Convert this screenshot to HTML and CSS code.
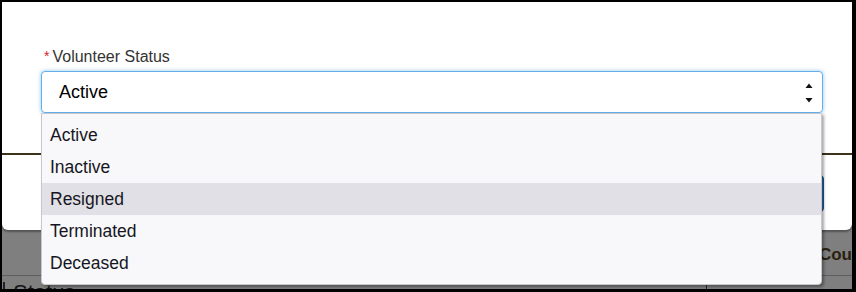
FILE: index.html
```html
<!DOCTYPE html>
<html>
<head>
<meta charset="utf-8">
<link rel="stylesheet" href="styles.css">
</head>
<body>
<div class="frame">
  <div class="page">
    <div class="thead">
      <div class="th-spacer"></div>
      <div class="th">Cou</div>
    </div>
    <div class="trow">
      <div class="td-first"><span class="bar"></span><span class="status">Status</span></div>
      <div class="td"></div>
    </div>
  </div>

  <div class="modal">
    <div class="modal-body">
      <label class="field-label"><span class="req">*</span>Volunteer Status</label>
      <div class="select">
        <span class="select-value">Active</span>
        <svg class="arrows" width="8" height="20" viewBox="0 0 8 20">
          <polygon points="0.5,5 4,0.5 7.5,5" fill="#111"/>
          <polygon points="0.5,15 7.5,15 4,19.5" fill="#111"/>
        </svg>
      </div>
    </div>
    <div class="modal-footer">
      <button class="btn">Save</button>
    </div>
  </div>

  <ul class="dropdown">
    <li class="opt">Active</li>
    <li class="opt">Inactive</li>
    <li class="opt hl">Resigned</li>
    <li class="opt">Terminated</li>
    <li class="opt">Deceased</li>
  </ul>
</div>
</body>
</html>
```

FILE: styles.css
```css
* { box-sizing: border-box; }
html, body { margin: 0; padding: 0; background: #000; }
body { font-family: "Liberation Sans", Arial, sans-serif; }

.frame {
  position: relative;
  width: 850px;
  height: 287px;
  margin: 2px 0 0 2px;
  overflow: hidden;
  background: #7f7f7f;
}

/* page behind the backdrop */
.page { padding-top: 230px; }
.thead {
  display: flex;
  height: 44px;
  border-bottom: 1px solid #5e5e5e;
}
.th-spacer { width: 819px; }
.th {
  font-weight: bold;
  font-size: 17px;
  color: #2b2110;
  padding-top: 13px;
  padding-left: 2px;
}
.trow {
  display: grid;
  grid-template-columns: 705px 1fr;
  height: 40px;
}
.td-first {
  border-right: 1px solid #2a2a2a;
  display: flex;
  align-items: flex-start;
  padding-top: 4px;
}
.bar {
  display: inline-block;
  width: 2px;
  height: 12px;
  margin-left: 1px;
  margin-top: 2px;
  background: #222;
}
.status {
  margin-left: 8px;
  font-size: 22px;
  color: #161616;
}

/* modal */
.modal {
  position: absolute;
  top: 0;
  left: 0;
  width: 850px;
  height: 228px;
  background: #fff;
  border-radius: 0 0 6px 6px;
  box-shadow: 0 2px 2px rgba(0,0,0,0.35);
}
.modal-body {
  padding: 44px 29px 40px 39px;
  border-bottom: 2px solid #3d3118;
}
.field-label {
  display: block;
  height: 20px;
  line-height: 20px;
  font-size: 16px;
  color: #333;
  padding-left: 3px;
  margin-bottom: 5px;
}
.req {
  color: #d9212c;
  font-size: 14px;
  margin-right: 3px;
  vertical-align: 1px;
}
.select {
  display: flex;
  align-items: center;
  justify-content: space-between;
  height: 42px;
  border: 1px solid #66afe9;
  border-radius: 4px;
  box-shadow: 0 0 4px rgba(102,175,233,0.7);
  padding: 0 9px 0 17px;
  background: #fff;
}
.select-value {
  font-size: 18px;
  color: #000;
}
.arrows { display: block; margin-top: 1px; }

.modal-footer {
  display: flex;
  justify-content: flex-end;
  padding: 20px 28px 0 0;
}
.btn {
  height: 37px;
  width: 90px;
  border: 1px solid #1d5a92;
  border-radius: 4px;
  background: #2a6fb0;
  color: #fff;
  font-family: inherit;
  font-size: 16px;
}

/* dropdown menu */
.dropdown {
  position: absolute;
  left: 39px;
  top: 111px;
  width: 781px;
  height: 172px;
  margin: 0;
  padding: 5px 0;
  list-style: none;
  background: #f8f8fa;
  border: 1px solid #c8c8cc;
  border-radius: 0 0 4px 4px;
  box-shadow: 2px 2px 3px rgba(0,0,0,0.35);
}
.opt {
  height: 32px;
  line-height: 32px;
  padding-left: 8px;
  font-size: 17.5px;
  color: #161622;
}
.opt.hl { background: #e1e0e6; }
```
